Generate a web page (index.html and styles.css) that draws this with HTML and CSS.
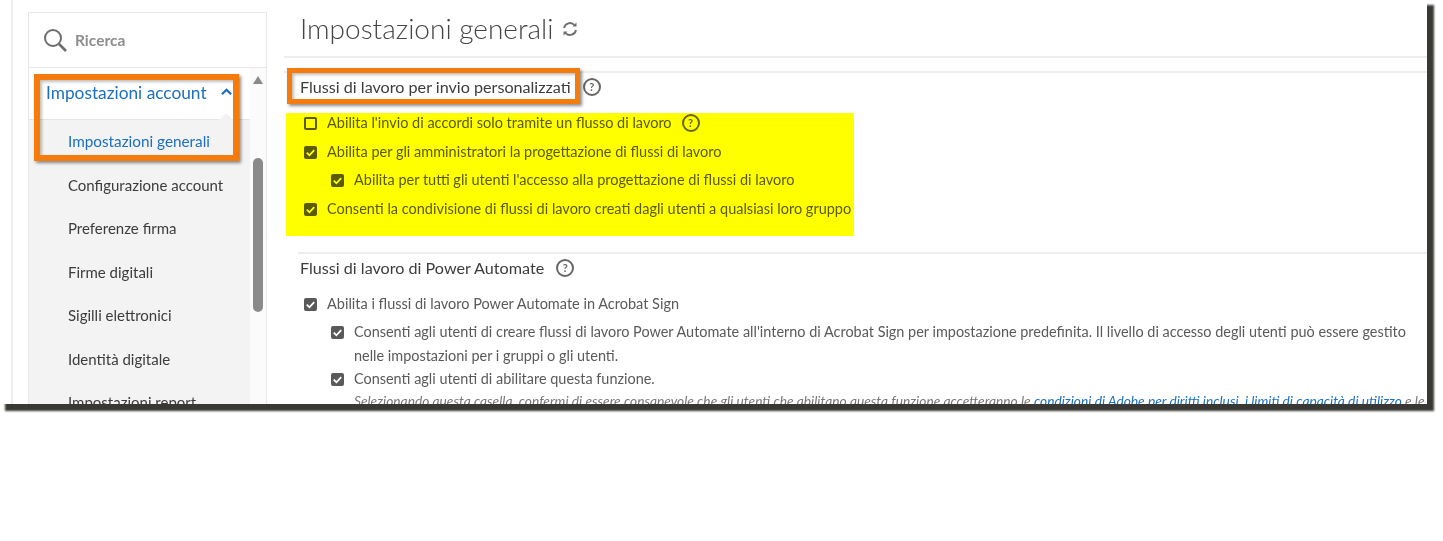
FILE: index.html
```html
<!DOCTYPE html>
<html lang="it">
<head>
    <meta charset="UTF-8">
    <title>Impostazioni generali</title>
    <link rel="stylesheet" href="styles.css">
</head>
<body>
    <div class="frame">
    <div class="shot">
        <div class="page">
            <div class="sidebar">
                <div class="search">
                    <svg class="search-icon" viewBox="0 0 24 24" width="24" height="24"><circle cx="10" cy="10" r="8" fill="none" stroke="#6e6e6e" stroke-width="2"/><path d="M16 16l7 7" stroke="#6e6e6e" stroke-width="2.6" fill="none"/></svg>
                    <span>Ricerca</span>
                </div>
                <div class="side-body">
                    <div class="nav">
                        <div class="nav-head">
                            <span>Impostazioni account</span>
                            <svg viewBox="0 0 12 8" width="11" height="8"><path d="M1 6.5l5-5 5 5" fill="none" stroke="#1d6fc0" stroke-width="2.4"/></svg>
                        </div>
                        <ul class="nav-list">
                            <li class="active">Impostazioni generali</li>
                            <li>Configurazione account</li>
                            <li>Preferenze firma</li>
                            <li>Firme digitali</li>
                            <li>Sigilli elettronici</li>
                            <li>Identità digitale</li>
                            <li>Impostazioni report</li>
                        </ul>
                    </div>
                    <div class="scrollbar">
                        <div class="arrow"></div>
                        <div class="thumb"></div>
                    </div>
                </div>
            </div>

            <div class="main">
                <div class="title">
                    <h1>Impostazioni generali</h1>
                    <svg viewBox="0 0 16 16" width="16" height="16"><path d="M2 7a6 6 0 0 1 10.500-2.800M14 9a6 6 0 0 1-10.500 2.800" fill="none" stroke="#6e6e6e" stroke-width="1.800"/><path d="M10.500 5.500h4v-4zM5.500 10.500h-4v4z" fill="#6e6e6e"/></svg>
                </div>

                <div class="section first">
                    <div class="section-head">
                        <h2>Flussi di lavoro per invio personalizzati</h2>
                        <span class="help">?</span>
                    </div>
                    <div class="row"><span class="box"></span><span>Abilita l'invio di accordi solo tramite un flusso di lavoro</span><span class="help help-row">?</span></div>
                    <div class="row"><span class="box on"><svg viewBox="0 0 14 14"><path d="M3 7.200l2.800 2.800 5.200-5.500" fill="none" stroke="#fff" stroke-width="2"/></svg></span><span>Abilita per gli amministratori la progettazione di flussi di lavoro</span></div>
                    <div class="row sub"><span class="box on"><svg viewBox="0 0 14 14"><path d="M3 7.200l2.800 2.800 5.200-5.500" fill="none" stroke="#fff" stroke-width="2"/></svg></span><span>Abilita per tutti gli utenti l'accesso alla progettazione di flussi di lavoro</span></div>
                    <div class="row"><span class="box on"><svg viewBox="0 0 14 14"><path d="M3 7.200l2.800 2.800 5.200-5.500" fill="none" stroke="#fff" stroke-width="2"/></svg></span><span>Consenti la condivisione di flussi di lavoro creati dagli utenti a qualsiasi loro gruppo</span></div>
                </div>

                <div class="section second">
                    <div class="section-head">
                        <h2>Flussi di lavoro di Power Automate</h2>
                        <span class="help">?</span>
                    </div>
                    <div class="opt"><span class="box on"><svg viewBox="0 0 14 14"><path d="M3 7.200l2.800 2.800 5.200-5.500" fill="none" stroke="#fff" stroke-width="2"/></svg></span><span>Abilita i flussi di lavoro Power Automate in Acrobat Sign</span></div>
                    <div class="opt sub gap"><span class="box on"><svg viewBox="0 0 14 14"><path d="M3 7.200l2.800 2.800 5.200-5.500" fill="none" stroke="#fff" stroke-width="2"/></svg></span><span>Consenti agli utenti di creare flussi di lavoro Power Automate all'interno di Acrobat Sign per impostazione predefinita. Il livello di accesso degli utenti può essere gestito nelle impostazioni per i gruppi o gli utenti.</span></div>
                    <div class="opt sub tight"><span class="box on"><svg viewBox="0 0 14 14"><path d="M3 7.200l2.800 2.800 5.200-5.500" fill="none" stroke="#fff" stroke-width="2"/></svg></span><span>Consenti agli utenti di abilitare questa funzione.</span></div>
                    <p class="note">Selezionando questa casella, confermi di essere consapevole che gli utenti che abilitano questa funzione accetteranno le <a href="#">condizioni di Adobe per diritti inclusi</a>, <a href="#">i limiti di capacità di utilizzo</a> e le</p>
                </div>
            </div>
        </div>

        <div class="notch"></div>
        <div class="marker marker-nav"></div>
        <div class="marker marker-head"></div>
        <div class="highlight"></div>
    </div>
    </div>
</body>
</html>
```

FILE: styles.css
```css
html, body {
    height: 100%;
}
body {
    margin: 0;
    background: #fff;
    font-family: "Lato", sans-serif;
    color: #5a5a5a;
}
.frame {
    width: 1427px;
    height: 404px;
    box-shadow: 6px 6px 2px 1px #3a3835;
}
.shot {
    position: relative;
    isolation: isolate;
    height: 100%;
    overflow: hidden;
    background: #fff;
}
.page {
    display: flex;
    height: 100%;
    box-sizing: border-box;
    margin-left: 11px;
    padding: 12px 0 0 15px;
    border-left: 2px solid #eeeeee;
}

/* left column */
.sidebar {
    width: 239px;
    flex: none;
    box-sizing: border-box;
    border: 1px solid #e8e8e8;
}
.search {
    display: flex;
    align-items: center;
    gap: 8px;
    height: 54px;
    padding-left: 14px;
    border-bottom: 1px solid #e8e8e8;
    color: #8e8e8e;
    font-size: 15.500px;
    font-weight: 700;
}
.side-body {
    display: flex;
}
.nav {
    width: 221px;
    flex: none;
}
.nav-head {
    display: flex;
    align-items: center;
    justify-content: space-between;
    box-sizing: border-box;
    height: 52px;
    padding: 0 18px 3px 17px;
    color: #1d6fc0;
    font-size: 17.300px;
    border-bottom: 1px solid #e4e4e4;
}
.nav-list {
    list-style: none;
    margin: 0;
    padding: 0 0 0 39px;
    background: #f3f3f3;
    font-size: 15px;
    color: #3c3c3c;
}
.nav-list li {
    height: 43.500px;
    line-height: 43.500px;
}
.nav-list .active {
    color: #1d6fc0;
    font-size: 15.300px;
}
.scrollbar {
    flex: 1;
    padding-top: 8px;
    background: #fbfbfb;
}
.arrow {
    width: 0;
    margin-left: 3px;
    border: 5px solid transparent;
    border-top: 0;
    border-bottom: 8px solid #8a8a8a;
}
.thumb {
    width: 10px;
    height: 154px;
    margin: 74px 0 0 3px;
    border-radius: 5px;
    background: #8a8a8a;
}

/* right column */
.main {
    flex: 1;
    min-width: 0;
    margin: -12px 0 0 17px;
}
.title {
    display: flex;
    align-items: center;
    gap: 8px;
    height: 58px;
    padding: 2px 0 0 16px;
    box-sizing: border-box;
    border-bottom: 2px solid #eeeeee;
}
.title h1 {
    margin: 0 0 2px;
    font-size: 28px;
    font-weight: 300;
    color: #444;
}
.section {
    border-top: 2px solid #eeeeee;
}
.section.first {
    margin-top: 13px;
    padding-left: 16px;
}
.section.second {
    margin: 28.500px 0 0 14px;
    padding-left: 2px;
}
.section-head {
    display: flex;
    align-items: center;
    gap: 12px;
    height: 27px;
    margin-bottom: 9px;
}
.second .section-head {
    margin-bottom: 11px;
}
h2 {
    margin: 0;
    font-size: 16.150px;
    font-weight: 400;
    color: #3c3c3c;
}
.help {
    display: inline-block;
    box-sizing: border-box;
    width: 18px;
    height: 18px;
    border: 2px solid #666;
    border-radius: 50%;
    color: #666;
    font-size: 11px;
    font-weight: 700;
    line-height: 14px;
    text-align: center;
}
.row, .opt {
    display: flex;
    align-items: flex-start;
    gap: 10px;
    padding-left: 4px;
    font-size: 14.500px;
}
.row {
    height: 28.700px;
    line-height: 28.700px;
}
.opt {
    line-height: 24px;
}
.sub {
    padding-left: 31px;
}
.opt.sub {
    font-size: 14.440px;
}
.opt.gap {
    margin-top: 4px;
}
.opt.tight {
    margin-top: -1px;
}
.row .box {
    margin-top: 8px;
}
.opt .box {
    margin-top: 6px;
}
.box {
    flex: none;
    box-sizing: border-box;
    width: 13px;
    height: 13px;
    border: 2px solid #5a5a5a;
    border-radius: 2px;
}
.box.on {
    background: #5a5a5a;
}
.box svg {
    display: block;
    width: 13px;
    height: 13px;
    margin: -2px;
}
.help-row {
    margin: 5px 0 0 0;
}
.note {
    margin: 1px 0 0;
    padding-left: 54px;
    font-size: 13.760px;
    font-style: italic;
    line-height: 18px;
    color: #777;
    white-space: nowrap;
}
.note a {
    color: #1d6fc0;
}

/* annotations drawn over the screenshot */
.notch {
    position: absolute;
    left: 221px;
    top: 115px;
    width: 10px;
    height: 10px;
    background: #f3f3f3;
    transform: rotate(45deg);
}
.marker {
    position: absolute;
    box-sizing: border-box;
    border: 6px solid #f47b0c;
    box-shadow: 2px 2px 3px rgba(0, 0, 0, .45), inset 2px 2px 3px rgba(0, 0, 0, .25);
}
.marker-nav {
    left: 34px;
    top: 74px;
    width: 205px;
    height: 87px;
}
.marker-head {
    left: 287px;
    top: 68px;
    width: 293px;
    height: 36px;
    border-width: 5px;
}
.highlight {
    position: absolute;
    left: 286px;
    top: 113px;
    width: 568px;
    height: 123px;
    background: #ffff00;
    mix-blend-mode: multiply;
}
```
